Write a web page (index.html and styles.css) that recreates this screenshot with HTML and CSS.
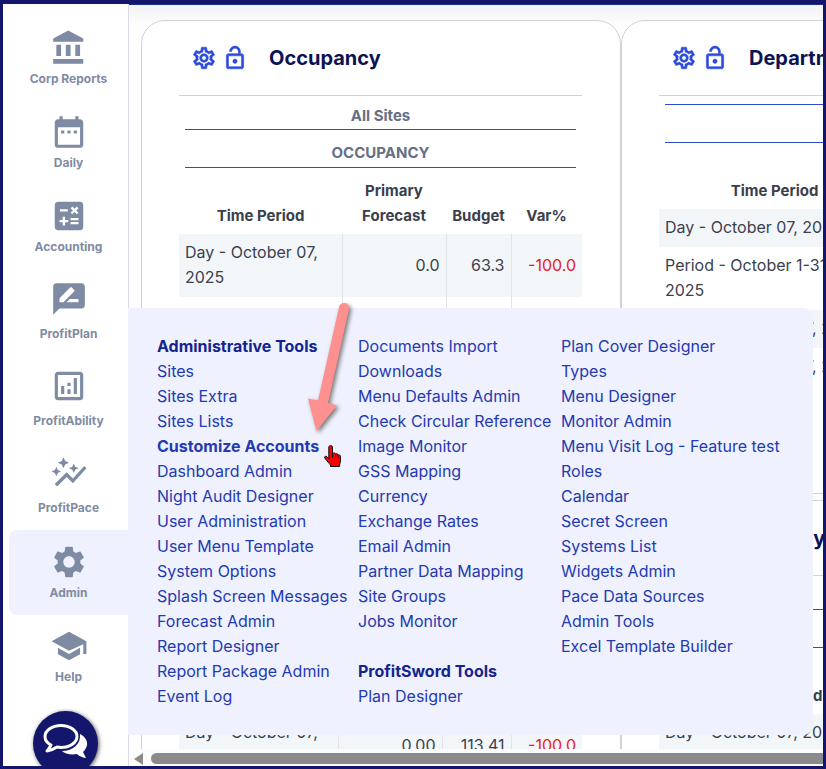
FILE: index.html
```html
<!DOCTYPE html>
<html lang="en">
<head>
<meta charset="utf-8">
<title>Dashboard</title>
<link rel="stylesheet" href="styles.css">
</head>
<body>
<div class="app">
  <nav class="sidebar" aria-label="Main">
    <a class="nav-item" href="#"><svg viewBox="0 0 24 24"><path d="M4 10v7h3v-7H4zm6 0v7h3v-7h-3zM2 22h19v-3H2v3zm14-12v7h3v-7h-3zm-4.500-9L2 6v2h19V6l-9.500-5z"/></svg><span>Corp Reports</span></a>
    <a class="nav-item" href="#"><svg viewBox="0 0 24 24"><path d="M9 11H7v2h2v-2zm4 0h-2v2h2v-2zm4 0h-2v2h2v-2zm2-7h-1V2h-2v2H8V2H6v2H5c-1.110 0-1.990.900-1.990 2L3 20c0 1.100.890 2 2 2h14c1.100 0 2-.900 2-2V6c0-1.100-.900-2-2-2zm0 16H5V9h14v11z"/></svg><span>Daily</span></a>
    <a class="nav-item" href="#"><svg viewBox="0 0 24 24"><path d="M19 3H5c-1.100 0-2 .900-2 2v14c0 1.100.900 2 2 2h14c1.100 0 2-.900 2-2V5c0-1.100-.900-2-2-2zm-5.970 4.060L14.090 6l1.410 1.410L16.910 6l1.060 1.060-1.410 1.410 1.410 1.410-1.060 1.060-1.410-1.400-1.410 1.410-1.060-1.060 1.410-1.410-1.410-1.420zm-6.780.660h5v1.500h-5v-1.500zM11.500 16h-2v2H8v-2H6v-1.500h2v-2h1.500v2h2V16zm6.500 1.250h-5v-1.500h5v1.500zm0-2.500h-5v-1.500h5v1.500z"/></svg><span>Accounting</span></a>
    <a class="nav-item tall" href="#"><svg viewBox="0 0 24 24"><path d="M20 2H4c-1.100 0-1.990.900-1.990 2L2 22l4-4h14c1.100 0 2-.900 2-2V4c0-1.100-.900-2-2-2zM6 14v-2.470l6.880-6.880c.200-.200.510-.200.710 0l1.770 1.770c.200.200.200.510 0 .710L8.470 14H6zm12 0h-7.500l2-2H18v2z"/></svg><span>ProfitPlan</span></a>
    <a class="nav-item tall" href="#"><svg viewBox="0 0 24 24"><path d="M19 3H5c-1.100 0-2 .900-2 2v14c0 1.100.900 2 2 2h14c1.100 0 2-.900 2-2V5c0-1.100-.900-2-2-2zm0 16H5V5h14v14zM7 12h2v5H7zM15 7h2v10h-2zM11 14h2v3h-2zM11 10h2v2h-2z"/></svg><span>ProfitAbility</span></a>
    <a class="nav-item tall" href="#"><svg viewBox="0 0 24 24"><path d="M14.060 9.940L12 9l2.060-.940L15 6l.940 2.060L18 9l-2.060.940L15 12zM4 14l.940-2.060L7 11l-2.060-.940L4 8l-.940 2.060L1 11l2.060.940zM8.500 9l1.090-2.410L12 5.500 9.590 4.410 8.500 2 7.410 4.410 5 5.500l2.410 1.090zM4.500 20.500l6-6.010 4 4L23 8.930l-1.410-1.410-7.090 7.970-4-4L3 19z"/></svg><span>ProfitPace</span></a>
    <a class="nav-item active" href="#"><svg viewBox="0 0 24 24"><path d="M19.140 12.940c.040-.300.060-.610.060-.940 0-.320-.020-.640-.070-.940l2.030-1.580c.180-.140.230-.410.120-.610l-1.920-3.320c-.120-.220-.370-.290-.590-.220l-2.390.960c-.500-.380-1.030-.700-1.620-.940l-.360-2.540c-.040-.240-.240-.410-.480-.410h-3.840c-.240 0-.430.170-.470.410l-.360 2.540c-.590.240-1.130.570-1.620.940l-2.390-.960c-.220-.080-.470 0-.590.220L2.740 8.870c-.120.210-.080.470.120.610l2.030 1.580c-.050.300-.090.630-.090.940s.020.640.070.940l-2.030 1.580c-.180.140-.230.410-.120.610l1.920 3.320c.120.220.370.290.590.220l2.390-.960c.500.380 1.030.700 1.620.940l.360 2.540c.050.240.240.410.480.410h3.840c.240 0 .440-.170.470-.410l.360-2.540c.590-.240 1.130-.560 1.620-.940l2.390.960c.220.080.470 0 .590-.220l1.920-3.320c.120-.220.070-.470-.120-.610l-2.010-1.580zM12 15.600c-1.980 0-3.600-1.620-3.600-3.600s1.620-3.600 3.600-3.600 3.600 1.620 3.600 3.600-1.620 3.600-3.600 3.600z"/></svg><span>Admin</span></a>
    <a class="nav-item" href="#"><svg viewBox="0 0 24 24"><path d="M5 13.180v4L12 21l7-3.820v-4L12 17l-7-3.820zM12 3L1 9l11 6 9-4.090V17h2V9L12 3z"/></svg><span>Help</span></a>
    <button class="chat" aria-label="Chat"><svg viewBox="0 0 46 36"><path d="M37 11C43 14 46 20 43 25C42 27 41 28 40 29L43 35C39 34.500 36 33 34 31C28 32 22 31 19 28C30 28 38 21 37 11Z" fill="#fff"/><path d="M18 2.500C9 2.500 2 7.500 2 13.500C2 17 4 20 8 22C7 24 6 26 4 28C8 27.500 11 26 14 24L18 24.500C27 24.500 34 19.500 34 13.500S27 2.500 18 2.500Z" fill="#14166b" stroke="#fff" stroke-width="3" stroke-linejoin="round"/></svg></button>
  </nav>

  <main class="main">
    <div class="board">
      <section class="card">
        <header class="card-head">
          <button class="tool" aria-label="Settings"><svg viewBox="0 0 24 24"><use href="#gear"/></svg></button>
          <button class="tool" aria-label="Unlock"><svg viewBox="0 0 24 24"><use href="#lock"/></svg></button>
          <h2>Occupancy</h2>
        </header>
        <div class="caption">All Sites</div>
        <div class="caption">OCCUPANCY</div>
        <table>
          <colgroup><col class="c-time"><col class="c-fore"><col class="c-bud"><col class="c-var"></colgroup>
          <thead><tr><th>Time Period</th><th>Primary Forecast</th><th>Budget</th><th>Var%</th></tr></thead>
          <tbody>
            <tr><td>Day - October 07, 2025</td><td>0.0</td><td>63.3</td><td class="neg">-100.0</td></tr>
            <tr><td>Period - October 1-31, 2025</td><td>0.0</td><td>63.3</td><td class="neg">-100.0</td></tr>
          </tbody>
        </table>
      </section>
      <section class="card">
        <header class="card-head">
          <button class="tool" aria-label="Settings"><svg viewBox="0 0 24 24"><use href="#gear"/></svg></button>
          <button class="tool" aria-label="Unlock"><svg viewBox="0 0 24 24"><use href="#lock"/></svg></button>
          <h2>Department</h2>
        </header>
        <div class="caption empty"></div>
        <div class="caption"></div>
        <table>
          <colgroup><col class="c-wide"><col></colgroup>
          <thead><tr class="spaced"><th>Time Period</th><th>Budget</th></tr></thead>
          <tbody>
            <tr><td>Day - October 07, 2025</td><td>0.0</td></tr>
            <tr><td>Period - October 1-31,<br>2025</td><td>0.0</td></tr>
            <tr><td>Month - October 07, 2025</td><td>0.0</td></tr>
            <tr><td>Month - October 07, 2024</td><td>0.0</td></tr>
          </tbody>
        </table>
      </section>
      <section class="card">
        <header class="card-head">
          <button class="tool" aria-label="Settings"><svg viewBox="0 0 24 24"><use href="#gear"/></svg></button>
          <button class="tool" aria-label="Unlock"><svg viewBox="0 0 24 24"><use href="#lock"/></svg></button>
          <h2>ADR</h2>
        </header>
        <div class="caption">All Sites</div>
        <div class="caption">ADR</div>
        <table>
          <colgroup><col class="c-time2"><col class="c-fore"><col class="c-bud2"><col class="c-var"></colgroup>
          <thead><tr><th>Time Period</th><th>Primary Forecast</th><th>Budget</th><th>Var%</th></tr></thead>
          <tbody><tr><td>Day - October 07, 2025</td><td>0.00</td><td>113.41</td><td class="neg">-100.0</td></tr></tbody>
        </table>
      </section>
      <section class="card">
        <header class="card-head">
          <button class="tool" aria-label="Settings"><svg viewBox="0 0 24 24"><use href="#gear"/></svg></button>
          <button class="tool" aria-label="Unlock"><svg viewBox="0 0 24 24"><use href="#lock"/></svg></button>
          <h2>Activity</h2>
        </header>
        <div class="caption"></div>
        <div class="caption"></div>
        <table>
          <colgroup><col class="c-wide2"><col></colgroup>
          <thead><tr><th>Time Period</th><th>Primary<br>Forecast</th></tr></thead>
          <tbody><tr><td>Day - October 07, 2025</td><td>0.0</td></tr></tbody>
        </table>
      </section>
    </div>
    <div class="scrollbar" aria-hidden="true"><span class="arrow"></span><span class="thumb"></span></div>
  </main>

  <div class="menu">
    <ul>
      <li><strong>Administrative Tools</strong></li>
      <li><a href="#">Sites</a></li>
      <li><a href="#">Sites Extra</a></li>
      <li><a href="#">Sites Lists</a></li>
      <li><a class="current" href="#">Customize Accounts</a></li>
      <li><a href="#">Dashboard Admin</a></li>
      <li><a href="#">Night Audit Designer</a></li>
      <li><a href="#">User Administration</a></li>
      <li><a href="#">User Menu Template</a></li>
      <li><a href="#">System Options</a></li>
      <li><a href="#">Splash Screen Messages</a></li>
      <li><a href="#">Forecast Admin</a></li>
      <li><a href="#">Report Designer</a></li>
      <li><a href="#">Report Package Admin</a></li>
      <li><a href="#">Event Log</a></li>
    </ul>
    <ul>
      <li><a href="#">Documents Import</a></li>
      <li><a href="#">Downloads</a></li>
      <li><a href="#">Menu Defaults Admin</a></li>
      <li><a href="#">Check Circular Reference</a></li>
      <li><a href="#">Image Monitor</a></li>
      <li><a href="#">GSS Mapping</a></li>
      <li><a href="#">Currency</a></li>
      <li><a href="#">Exchange Rates</a></li>
      <li><a href="#">Email Admin</a></li>
      <li><a href="#">Partner Data Mapping</a></li>
      <li><a href="#">Site Groups</a></li>
      <li><a href="#">Jobs Monitor</a></li>
      <li class="group"><strong>ProfitSword Tools</strong></li>
      <li><a href="#">Plan Designer</a></li>
    </ul>
    <ul>
      <li><a href="#">Plan Cover Designer</a></li>
      <li><a href="#">Types</a></li>
      <li><a href="#">Menu Designer</a></li>
      <li><a href="#">Monitor Admin</a></li>
      <li><a href="#">Menu Visit Log - Feature test</a></li>
      <li><a href="#">Roles</a></li>
      <li><a href="#">Calendar</a></li>
      <li><a href="#">Secret Screen</a></li>
      <li><a href="#">Systems List</a></li>
      <li><a href="#">Widgets Admin</a></li>
      <li><a href="#">Pace Data Sources</a></li>
      <li><a href="#">Admin Tools</a></li>
      <li><a href="#">Excel Template Builder</a></li>
    </ul>
  </div>

  <svg class="pointer" viewBox="0 0 100 200" aria-hidden="true">
    <path class="arrow-shape" d="M59 17 A5 5 0 0 1 69 19 L48 113 L57 115.500 L36.500 141 L28 108.500 L38 110.500 Z"/>
    <path d="M50.500 155.500c1.700 0 2 1 2 2.500v5.500c1-1 3-.700 3 .600 1-.800 2.600-.300 2.600.900 1.200-.400 2.400.200 2.400 1.500v4.500c0 1.500-1 2.500-1 4v1.500h-9v-1.500c-1.500-2-3.500-3.500-5.700-7-.700-1.600 1-2.400 2.300-1.200l1.700 1.700V158c0-1.500.300-2.500 1.700-2.500z" fill="#f00" stroke="#111" stroke-width="1"/>
    <path d="M52.500 163.500v4M55.500 164.500v3M58 165.500v2.500" stroke="#111" stroke-width="1"/>
  </svg>
</div>

<svg class="defs" aria-hidden="true">
  <symbol id="gear" viewBox="0 0 24 24"><path d="M19.430 12.980c.040-.320.070-.640.070-.980 0-.340-.030-.660-.070-.980l2.110-1.650c.190-.150.240-.420.120-.640l-2-3.460c-.090-.160-.260-.250-.440-.250-.060 0-.120.010-.170.030l-2.490 1c-.520-.400-1.080-.730-1.690-.980l-.380-2.650C14.460 2.180 14.250 2 14 2h-4c-.250 0-.460.180-.490.420l-.380 2.650c-.610.250-1.170.590-1.690.980l-2.490-1c-.060-.020-.120-.030-.180-.030-.170 0-.340.090-.430.250l-2 3.460c-.130.220-.070.490.120.640l2.110 1.650c-.040.320-.070.650-.070.980 0 .330.030.660.070.980l-2.110 1.650c-.190.150-.240.420-.120.640l2 3.460c.090.160.260.250.440.250.060 0 .120-.010.170-.030l2.490-1c.520.400 1.080.730 1.690.980l.380 2.650c.030.240.240.420.490.420h4c.250 0 .460-.180.490-.420l.380-2.650c.610-.250 1.170-.590 1.690-.980l2.490 1c.060.020.120.030.180.030.170 0 .340-.090.430-.250l2-3.460c.120-.220.070-.490-.120-.640l-2.110-1.650zm-1.980-1.710c.040.310.050.520.050.730 0 .210-.020.430-.050.730l-.140 1.130.890.700 1.080.840-.700 1.210-1.270-.510-1.040-.420-.900.680c-.430.320-.840.560-1.250.730l-1.060.430-.160 1.130-.200 1.350h-1.400l-.190-1.350-.160-1.130-1.060-.430c-.430-.180-.830-.410-1.230-.710l-.910-.700-1.060.430-1.270.510-.700-1.210 1.080-.840.890-.700-.140-1.130c-.030-.310-.050-.540-.050-.740s.020-.430.050-.730l.140-1.130-.890-.700-1.080-.840.700-1.210 1.270.510 1.040.420.900-.680c.430-.320.840-.560 1.250-.730l1.060-.430.160-1.130.200-1.350h1.390l.190 1.350.160 1.130 1.060.430c.430.180.830.410 1.230.710l.910.700 1.060-.430 1.270-.510.700 1.210-1.070.850-.890.700.140 1.130zM12 8c-2.210 0-4 1.790-4 4s1.790 4 4 4 4-1.790 4-4-1.790-4-4-4zm0 6c-1.100 0-2-.900-2-2s.900-2 2-2 2 .900 2 2-.900 2-2 2z"/></symbol>
  <symbol id="lock" viewBox="0 0 24 24"><path d="M12 17c1.100 0 2-.900 2-2s-.900-2-2-2-2 .900-2 2 .900 2 2 2zm6-9h-1V6c0-2.760-2.240-5-5-5S7 3.240 7 6h1.900c0-1.710 1.390-3.100 3.100-3.100s3.100 1.390 3.100 3.100v2H6c-1.100 0-2 .900-2 2v10c0 1.100.900 2 2 2h12c1.100 0 2-.900 2-2V10c0-1.100-.900-2-2-2zm0 12H6V10h12v10z"/></symbol>
</svg>
</body>
</html>
```
FILE: styles.css
```css
* { box-sizing: border-box; }

body {
  margin: 0;
  font-family: Inter, "Liberation Sans", sans-serif;
  font-size: 16px;
  line-height: 25px;
  color: #3b3f4c;
}

a { color: inherit; text-decoration: none; }
button { border: 0; padding: 0; background: none; cursor: pointer; }
.defs { display: none; }

.app {
  position: relative;
  display: flex;
  height: 100vh;
  border: 3px solid #14166b;
  border-top-width: 4px;
  overflow: hidden;
  background: #fff;
}

/* Sidebar */
.sidebar {
  position: relative;
  flex: none;
  width: 126px;
  padding: 13px 0 0 6px;
  border-right: 1px solid #d9dce8;
}

.nav-item {
  display: flex;
  flex-direction: column;
  align-items: center;
  justify-content: flex-end;
  gap: 4px;
  height: 84px;
  padding-bottom: 14px;
  font-size: 12px;
  line-height: 16px;
  font-weight: 700;
  color: #7f8ba3;
}

.nav-item svg { width: 38px; height: 38px; fill: currentColor; }
.nav-item.tall { height: 87px; gap: 8px; }
.nav-item.active {
  height: 85px;
  border-radius: 8px 0 0 8px;
  background: #eff1fe;
}

.chat {
  position: absolute;
  left: 30px;
  bottom: -10px;
  display: flex;
  align-items: center;
  justify-content: center;
  width: 65px;
  height: 65px;
  border-radius: 50%;
  background: #14166b;
  box-shadow: 1px 1px 4px #555;
}

.chat svg { width: 46px; height: 36px; margin-bottom: 6px; }

/* Dashboard */
.main {
  flex: 1;
  min-width: 0;
  display: flex;
  flex-direction: column;
  border-top: 1px solid #1b2e8c;
  background: #fdfdfd;
}

.board {
  flex: 1;
  min-height: 0;
  display: grid;
  grid-template-columns: 480px 480px;
  grid-auto-rows: 474px;
  row-gap: 6px;
  padding: 15px 12px 0;
  overflow: hidden;
  background: linear-gradient(#f3f3f5, #fdfdfd 20px);
}

.card {
  padding: 0 38px 0 37px;
  border: 1px solid #d2d2d2;
  border-radius: 24px;
  background: #fff;
  overflow: hidden;
}

.card:nth-child(n + 3) { border-radius: 24px 24px 0 0; }

.card-head {
  display: flex;
  align-items: center;
  height: 75px;
  padding-left: 12px;
  border-bottom: 1px solid #d2d2d2;
}

.tool { width: 26px; height: 26px; margin-right: 5px; }
.tool svg {
  display: block;
  width: 26px;
  height: 26px;
  fill: #2c4bdb;
  stroke: #2c4bdb;
  stroke-width: 0.5px;
}

.card h2 {
  margin: 0 0 0 16px;
  font-size: 20px;
  font-weight: 700;
  color: #0b1354;
}

.caption {
  height: 38px;
  margin: 0 6px;
  padding-top: 10px;
  border-bottom: 1px solid #2c4bc8;
  font-size: 15px;
  font-weight: 700;
  text-align: center;
  color: #667085;
}

.card-head + .caption { height: 34px; padding-top: 7px; }
.card-head + .caption.empty { height: 9px; padding: 0; }

table {
  width: 100%;
  margin-top: 10px;
  border-collapse: collapse;
  table-layout: fixed;
}

.c-time { width: 163px; }
.c-time2 { width: 159px; }
.c-fore { width: 104px; }
.c-bud { width: 65px; }
.c-bud2 { width: 69px; }
.c-wide { width: 231px; }
.c-wide2 { width: 239px; }

th {
  padding: 0 6px 6px;
  font-size: 15px;
  font-weight: 700;
  vertical-align: bottom;
}

.spaced th { padding-top: 25px; }

td {
  padding: 6px 6px 7px;
  text-align: right;
  border-left: 1px solid #e2e4e8;
}

td:first-child { text-align: left; border-left: 0; }
tbody tr:nth-child(odd) { background: #f3f6f9; }
.neg { color: #e8191c; }

.scrollbar {
  flex: none;
  display: flex;
  align-items: center;
  gap: 8px;
  height: 17px;
  padding: 2px 0 0 5px;
  background: #fcfcfc;
}

.arrow {
  border: solid transparent;
  border-width: 6px 9px 6px 0;
  border-right-color: #8b8b8b;
}

.thumb {
  flex: 1;
  height: 11px;
  border-radius: 6px 0 0 6px;
  background: #8b8b8b;
}

/* Flyout menu */
.menu {
  position: absolute;
  left: 125px;
  top: 304px;
  display: grid;
  grid-template-columns: 193px 195px 224px;
  column-gap: 8px;
  padding: 26px 28px 26px 29px;
  border-radius: 0 10px 10px 0;
  background: #eff1fe;
  color: #243ab0;
}

.menu ul { margin: 0; padding: 0; list-style: none; white-space: nowrap; }
.menu strong { font-weight: 700; color: #14248c; }
.menu .current { font-weight: 700; }
.menu .group { margin-top: 25px; }

.pointer {
  position: absolute;
  left: 277px;
  top: 286px;
  width: 100px;
  height: 200px;
  fill: none;
  pointer-events: none;
}

.arrow-shape { fill: #ff9090; filter: drop-shadow(2px 2px 2px #777); }
```
